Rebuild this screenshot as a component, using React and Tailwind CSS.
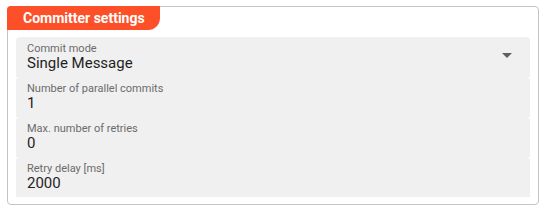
import React from "react";

const fields = [
  { label: "Commit mode", value: "Single Message", select: true },
  { label: "Number of parallel commits", value: "1" },
  { label: "Max. number of retries", value: "0" },
  { label: "Retry delay [ms]", value: "2000" },
];

export default function App() {
  return (
    <div
      className="w-[548px] h-[212px] bg-white pt-[6px] pl-[7px]"
      style={{ fontFamily: "Roboto, 'Liberation Sans', sans-serif" }}
    >
      <div className="w-[532px] border border-[#c4c4c4] rounded-[4px] pb-[7px]">
        {/* Header tab */}
        <div className="flex">
          <div className="h-[24px] w-[153px] -mt-px -ml-px bg-[#fd5028] rounded-tl-[4px] rounded-br-[12px] flex items-center pl-[16px]">
            <span className="text-white font-bold text-[14px] leading-none">Committer settings</span>
          </div>
        </div>

        {/* Fields */}
        <div className="flex flex-col px-[8px] pt-[7px]">
          {fields.map((f) => (
            <div
              key={f.label}
              className="relative h-[40px] bg-[#f0f0f0] rounded-t-[4px] pl-[11px] pt-[5px] flex flex-col"
            >
              <span className="text-[11px] leading-[13px] text-[#6b6b6b]">{f.label}</span>
              <span className="text-[15px] leading-[17px] text-[#1f1f1f]">{f.value}</span>
              {f.select && (
                <svg
                  className="absolute right-[18px] top-[16px]"
                  width="10"
                  height="5"
                  viewBox="0 0 10 5"
                >
                  <path d="M0 0 L10 0 L5 5 Z" fill="#5f5f5f" />
                </svg>
              )}
            </div>
          ))}
        </div>
      </div>
    </div>
  );
}
